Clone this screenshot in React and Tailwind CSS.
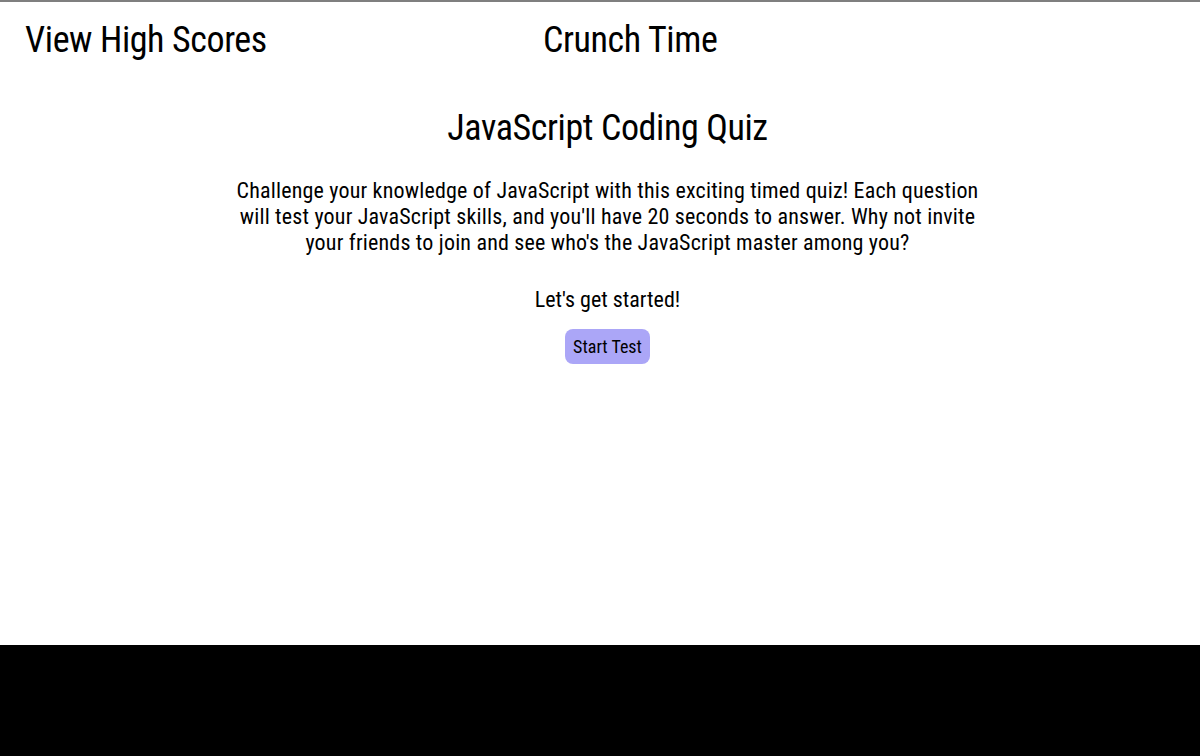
import React from "react";

const App = () => {
  return (
    <div className="min-h-[756px] flex flex-col bg-white text-black font-['Roboto_Condensed','Liberation_Sans',sans-serif]">
      {/* header */}
      <header className="border-t-2 border-[#7f7f7f] flex items-center h-[78px] pl-[25px]">
        <a className="w-[518px] text-[36px] leading-none tracking-[-0.4px]">View High Scores</a>
        <h2 className="text-[36px] leading-none tracking-[-0.4px]">Crunch Time</h2>
      </header>

      {/* quiz intro */}
      <main className="flex-1 flex flex-col items-center pl-[15px] text-center">
        <h1 className="text-[36px] leading-none tracking-[-0.4px] mt-[32px]">JavaScript Coding Quiz</h1>
        <p className="text-[22px] leading-[26px] tracking-[0.18px] max-w-[760px] mt-[32px]">
          Challenge your knowledge of JavaScript with this exciting timed quiz! Each question will test your
          JavaScript skills, and you'll have 20 seconds to answer. Why not invite your friends to join and see
          who's the JavaScript master among you?
        </p>
        <p className="text-[22px] leading-[26px] mt-[31px]">Let's get started!</p>
        <button className="mt-[16px] bg-[#aba6f7] rounded-lg px-2 h-[35px] text-[18px] font-['Roboto_Condensed',sans-serif]">
          Start Test
        </button>
      </main>

      <footer className="h-[111px] bg-black"></footer>
    </div>
  );
};

export default App;
